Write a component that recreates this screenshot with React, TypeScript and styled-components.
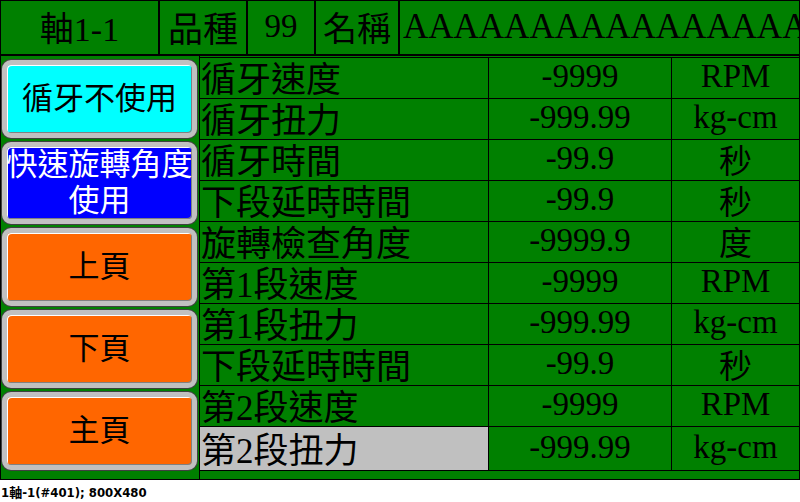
import React from "react";
import styled, { createGlobalStyle } from "styled-components";

const Global = createGlobalStyle`
  html, body { margin: 0; padding: 0; background: #ffffff; }
  * { box-sizing: border-box; }
`;

const FONT = `"Liberation Serif", "Noto Sans CJK TC", serif`;

const Screen = styled.div`
  width: 800px;
  height: 480px;
  background: #008000;
  border: 1px solid #000;
  display: flex;
  flex-direction: column;
  font-family: ${FONT};
  color: #000;
  overflow: hidden;
`;

const Header = styled.div`
  height: 55px;
  flex: none;
  display: grid;
  grid-template-columns: 159px 88px 68px 84px 1fr;
  border-bottom: 2px solid #000;
`;

const HeadCell = styled.div<{ $align?: string; $size?: number }>`
  border-right: 2px solid #000;
  display: flex;
  align-items: center;
  justify-content: ${(p) => p.$align || "center"};
  font-size: ${(p) => p.$size || 33}px;
  white-space: nowrap;
  overflow: hidden;
  padding-bottom: 2px;
  padding-left: ${(p) => (p.$align ? "3px" : "0")};
  &:last-child { border-right: none; }
`;

const Body = styled.div`
  flex: 1;
  display: flex;
  min-height: 0;
`;

const Side = styled.div`
  width: 199px;
  flex: none;
  display: flex;
  flex-direction: column;
  gap: 4px;
  padding: 4px 2px 9px 1px;
  border-right: 1px solid #000;
`;

const Btn = styled.div<{ $bg: string; $fg: string }>`
  flex: 1;
  border: 5px solid #c0c0c0;
  border-radius: 9px;
  background: ${(p) => p.$bg};
  color: ${(p) => p.$fg};
  box-shadow: inset 1px 1px 0 #ffffff, inset -1px -1px 0 #808080, 0 0 0 1px #404040;
  display: flex;
  align-items: center;
  justify-content: center;
  text-align: center;
  font-size: 31px;
  line-height: 36px;
  white-space: nowrap;
`;

const Table = styled.div`
  flex: 1;
  margin-top: 1px;
  align-self: flex-start;
  display: grid;
  grid-template-columns: 289px 183px 1fr;
  grid-template-rows: repeat(9, 41px) 44px;
  border-top: 1px solid #000;
`;

const Cell = styled.div<{ $label?: boolean; $bg?: string }>`
  border-right: 1px solid #000;
  border-bottom: 1px solid #000;
  background: ${(p) => p.$bg || "transparent"};
  display: flex;
  align-items: center;
  justify-content: ${(p) => (p.$label ? "flex-start" : "center")};
  padding-left: ${(p) => (p.$label ? "1px" : "0")};
  padding-bottom: 3px;
  font-size: ${(p) => (p.$label ? 35 : 33)}px;
  white-space: nowrap;
  overflow: hidden;
  &:nth-child(3n) { border-right: none; }
`;

const Status = styled.div`
  height: 22px;
  padding-left: 1px;
  display: flex;
  align-items: center;
  font-family: "DejaVu Sans Condensed", "DejaVu Sans", "Noto Sans CJK TC", sans-serif;
  font-weight: bold;
  font-size: 13px;
  color: #000;
`;

const rows: [string, string, string][] = [
  ["循牙速度", "-9999", "RPM"],
  ["循牙扭力", "-999.99", "kg-cm"],
  ["循牙時間", "-99.9", "秒"],
  ["下段延時時間", "-99.9", "秒"],
  ["旋轉檢查角度", "-9999.9", "度"],
  ["第1段速度", "-9999", "RPM"],
  ["第1段扭力", "-999.99", "kg-cm"],
  ["下段延時時間", "-99.9", "秒"],
  ["第2段速度", "-9999", "RPM"],
  ["第2段扭力", "-999.99", "kg-cm"],
];

export default function App() {
  return (
    <>
      <Global />
      <Screen>
        <Header>
          <HeadCell $size={34}>軸1-1</HeadCell>
          <HeadCell $size={35}>品種</HeadCell>
          <HeadCell>99</HeadCell>
          <HeadCell $size={34}>名稱</HeadCell>
          <HeadCell $align="flex-start" $size={35}>AAAAAAAAAAAAAAAAAAAA</HeadCell>
        </Header>
        <Body>
          <Side>
            <Btn $bg="#00ffff" $fg="#000">循牙不使用</Btn>
            <Btn $bg="#0000ff" $fg="#fff">
              快速旋轉角度
              <br />
              使用
            </Btn>
            <Btn $bg="#ff6600" $fg="#000">上頁</Btn>
            <Btn $bg="#ff6600" $fg="#000">下頁</Btn>
            <Btn $bg="#ff6600" $fg="#000">主頁</Btn>
          </Side>
          <Table>
            {rows.map(([l, v, u], i) => (
              <React.Fragment key={i}>
                <Cell $label $bg={i === rows.length - 1 ? "#c0c0c0" : undefined}>
                  {l}
                </Cell>
                <Cell>{v}</Cell>
                <Cell>{u}</Cell>
              </React.Fragment>
            ))}
          </Table>
        </Body>
      </Screen>
      <Status>1軸-1(#401); 800X480</Status>
    </>
  );
}
